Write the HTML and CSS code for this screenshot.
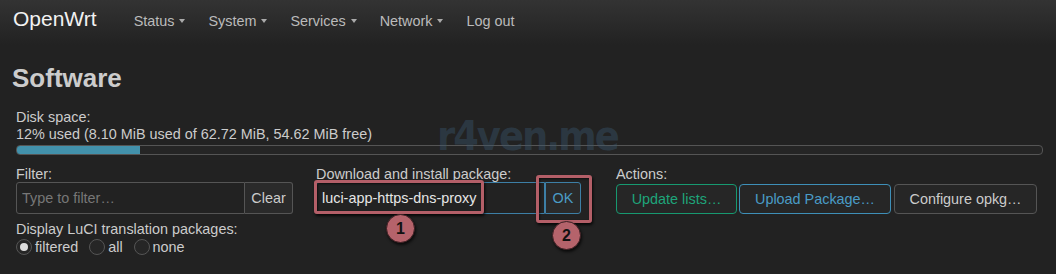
FILE: index.html
```html
<!DOCTYPE html>
<html lang="en">
<head>
    <meta charset="UTF-8">
    <title>OpenWrt - Software</title>
    <link rel="stylesheet" href="styles.css">
</head>
<body>
    <header class="topbar">
        <a class="brand" href="#">OpenWrt</a>
        <nav class="menu">
            <a href="#">Status <span class="caret"></span></a>
            <a href="#">System <span class="caret"></span></a>
            <a href="#">Services <span class="caret"></span></a>
            <a href="#">Network <span class="caret"></span></a>
            <a href="#">Log out</a>
        </nav>
    </header>

    <main class="content">
        <h2 class="page-title">Software</h2>

        <div class="section">
            <div class="disk">
                <div class="label">Disk space:</div>
                <div class="label">12% used (8.10 MiB used of 62.72 MiB, 54.62 MiB free)</div>
                <div class="progress"><div class="progress-fill" style="width: 12%"></div></div>
            </div>

            <div class="controls">
                <div class="col">
                    <div class="label">Filter:</div>
                    <div class="group">
                        <input class="field filter-field" type="text" placeholder="Type to filter…">
                        <button class="btn btn-addon">Clear</button>
                    </div>
                    <div class="label label-spaced">Display LuCI translation packages:</div>
                    <div class="radios">
                        <label class="radio"><span class="dot checked"></span>filtered</label>
                        <label class="radio"><span class="dot"></span>all</label>
                        <label class="radio"><span class="dot"></span>none</label>
                    </div>
                </div>

                <div class="col">
                    <div class="label">Download and install package:</div>
                    <div class="group">
                        <input class="field field-blue" type="text" value="luci-app-https-dns-proxy">
                        <button class="btn btn-addon btn-ok">OK</button>
                    </div>
                </div>

                <div class="col">
                    <div class="label">Actions:</div>
                    <div class="actions">
                        <button class="btn btn-green">Update lists…</button>
                        <button class="btn btn-blue">Upload Package…</button>
                        <button class="btn btn-gray">Configure opkg…</button>
                    </div>
                </div>
            </div>
        </div>
    </main>

    <!-- watermark and annotation marks drawn over the page -->
    <div class="watermark">r4ven.me</div>
    <div class="mark mark-one"></div>
    <div class="mark mark-two"></div>
    <div class="badge badge-one">1</div>
    <div class="badge badge-two">2</div>
</body>
</html>
```

FILE: styles.css
```css
/* Page base */
body {
    margin: 0;
    background-color: #222;
    color: #ccc;
    font-family: "Liberation Sans", Arial, sans-serif;
    font-size: 14.4px;
    position: relative;
    height: 274px;
    overflow: hidden;
}

/* Top navigation bar */
.topbar {
    height: 45px;
    box-sizing: border-box;
    padding: 0 13px;
    display: flex;
    align-items: baseline;
    background: linear-gradient(#333, #222);
}

.brand {
    color: #f2f2f2;
    text-decoration: none;
    font-size: 21px;
    line-height: 24px;
    padding-top: 7px;
    margin-right: 37px;
}

.menu {
    display: flex;
    gap: 23px;
}

.menu a {
    color: #bbb;
    text-decoration: none;
    line-height: 16px;
}

.caret {
    display: inline-block;
    width: 0;
    height: 0;
    margin-left: 1px;
    vertical-align: 3px;
    border-top: 4px solid #aaa;
    border-left: 3px solid transparent;
    border-right: 3px solid transparent;
}

/* Main content */
.content {
    padding: 18px 13px 0 12px;
}

.page-title {
    margin: 0;
    font-size: 26px;
    line-height: 30px;
    font-weight: bold;
    color: #ccc;
}

.section {
    padding-left: 4px;
    margin-top: 16px;
}

.label {
    line-height: 17px;
    color: #ccc;
}

.progress {
    margin-top: 2px;
    height: 8px;
    border: 1px solid #555;
    border-radius: 4px;
    background-color: #252525;
    overflow: hidden;
}

.progress-fill {
    height: 100%;
    background-color: #4291ab;
}

.controls {
    display: grid;
    grid-template-columns: 277px 277px 1fr;
    gap: 23px;
    margin-top: 11px;
}

.col .label {
    line-height: 16px;
}

.col .label-spaced {
    margin-top: 7px;
}

.group {
    display: flex;
    height: 32px;
}

.field {
    box-sizing: border-box;
    height: 32px;
    width: 229px;
    padding: 0 5px;
    border: 1px solid #555;
    border-radius: 3px 0 0 3px;
    background-color: #222;
    color: #e6e6e6;
    font-family: inherit;
    font-size: 14.4px;
    outline: none;
}

.field::placeholder {
    color: #777;
}

.field-blue {
    border-color: #3d7fa6;
}

.btn {
    box-sizing: border-box;
    height: 30px;
    padding: 0;
    border: 1px solid #555;
    border-radius: 4px;
    background-color: #262626;
    color: #ccc;
    font-family: inherit;
    font-size: 14.4px;
    white-space: nowrap;
    text-align: center;
    cursor: pointer;
}

.btn-addon {
    width: 48px;
    height: 32px;
    border-left: none;
    border-radius: 0 3px 3px 0;
    background-color: #2a2a2a;
}

.btn-ok {
    width: 36px;
    border: 1px solid #3d7fa6;
    color: #4a9cc6;
}

.actions {
    display: flex;
    gap: 2px;
    margin-top: 2px;
}

.btn-green {
    border-color: #179970;
    color: #1ea57a;
    width: 121px;
}

.btn-blue {
    border-color: #3e8fb8;
    color: #4a9cc6;
    width: 152px;
}

.btn-gray {
    margin-left: 1px;
    width: 143px;
}

/* Radio buttons */
.radios {
    display: flex;
    gap: 11px;
    margin-top: 2px;
    line-height: 16px;
}

.radio {
    display: flex;
    align-items: center;
    gap: 3px;
    color: #ccc;
}

.dot {
    box-sizing: border-box;
    width: 16px;
    height: 16px;
    border-radius: 50%;
    border: 1px solid #555;
    background-color: #262626;
    position: relative;
}

.dot.checked::after {
    content: "";
    position: absolute;
    left: 3px;
    top: 3px;
    width: 8px;
    height: 8px;
    border-radius: 50%;
    background-color: #ddd;
}

/* Watermark */
.watermark {
    position: absolute;
    left: 437px;
    top: 112px;
    font-family: "DejaVu Sans Condensed", "DejaVu Sans", sans-serif;
    font-weight: bold;
    font-size: 41px;
    letter-spacing: -2px;
    line-height: 48px;
    color: rgba(58, 88, 112, 0.42);
    pointer-events: none;
}

/* Annotation marks */
.mark {
    position: absolute;
    box-sizing: border-box;
    border: 3px solid #b45f68;
    border-radius: 3px;
    box-shadow: 1px 2px 3px rgba(0, 0, 0, 0.8), inset 1px 1px 2px rgba(0, 0, 0, 0.6);
}

.mark-one {
    left: 314px;
    top: 180px;
    width: 170px;
    height: 34px;
}

.mark-two {
    left: 536px;
    top: 175px;
    width: 56px;
    height: 48px;
}

.badge {
    position: absolute;
    box-sizing: border-box;
    width: 29px;
    height: 29px;
    border-radius: 50%;
    border: 1px solid #3c1f23;
    background-color: #b5636b;
    box-shadow: 1px 2px 3px rgba(0, 0, 0, 0.7);
    color: #111;
    font-family: "Liberation Sans", Arial, sans-serif;
    font-weight: bold;
    font-size: 16px;
    line-height: 27px;
    text-align: center;
}

.badge-one {
    left: 386px;
    top: 214px;
}

.badge-two {
    left: 552px;
    top: 221px;
}
```
